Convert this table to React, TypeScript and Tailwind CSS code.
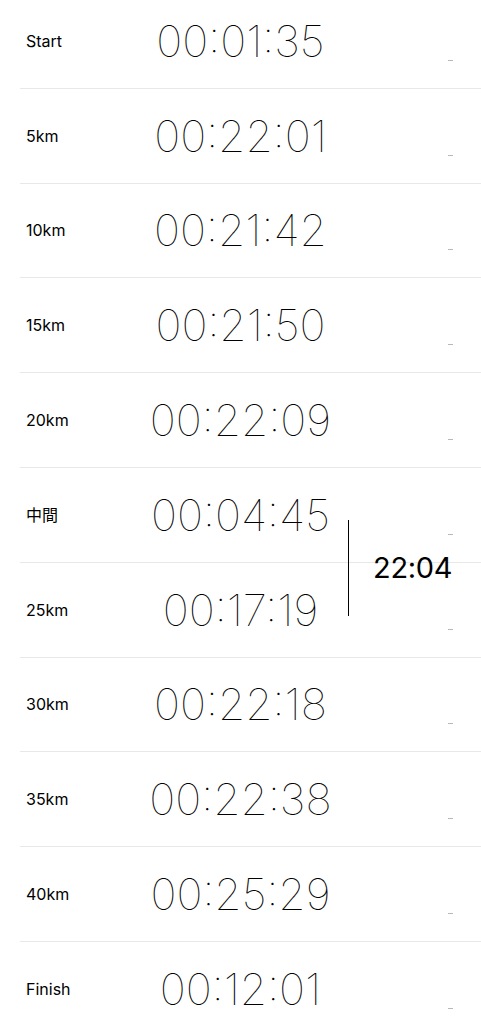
import React from "react";

type Row = { label: string; time: string };

const rows: Row[] = [
  { label: "Start", time: "00:01:35" },
  { label: "5km", time: "00:22:01" },
  { label: "10km", time: "00:21:42" },
  { label: "15km", time: "00:21:50" },
  { label: "20km", time: "00:22:09" },
  { label: "中間", time: "00:04:45" },
  { label: "25km", time: "00:17:19" },
  { label: "30km", time: "00:22:18" },
  { label: "35km", time: "00:22:38" },
  { label: "40km", time: "00:25:29" },
  { label: "Finish", time: "00:12:01" },
];

function SplitRow({ row }: { row: Row }) {
  return (
    <div>
      <div className="grid h-[93.8px] grid-cols-[1fr_auto_1fr] items-center">
        <div
          className="pl-[26px] text-[16px] font-normal text-black"
          style={{ fontFamily: "Inter, 'Noto Sans CJK JP', sans-serif" }}
        >
          {row.label}
        </div>
        <div
          className="text-[44px] font-thin leading-none text-black"
          style={{ fontFamily: "Inter, sans-serif" }}
        >
          {row.time}
        </div>
        <div className="flex h-full items-end justify-end pb-[27px] pr-[28px]">
          <div className="h-px w-[5px] bg-[#b8b8b8]" />
        </div>
      </div>
      <div className="ml-5 h-px bg-[#e8e8e8]" />
    </div>
  );
}

export default function App() {
  const before = rows.slice(0, 5);
  const pair = rows.slice(5, 7);
  const after = rows.slice(7);
  return (
    <div className="h-[1024px] w-full overflow-hidden bg-white">
      <div className="-mt-[6px]">
        {before.map((r) => (
          <SplitRow key={r.label} row={r} />
        ))}
        <div className="relative">
          {pair.map((r) => (
            <SplitRow key={r.label} row={r} />
          ))}
          <div className="absolute left-[347.5px] top-[52px] h-[96px] w-[1.5px] bg-black" />
          <div
            className="absolute left-[373px] top-[84px] text-[29px] font-normal leading-8 tracking-[-0.3px] text-black"
            style={{ fontFamily: "Inter, sans-serif" }}
          >
            22:04
          </div>
        </div>
        {after.map((r) => (
          <SplitRow key={r.label} row={r} />
        ))}
      </div>
    </div>
  );
}
